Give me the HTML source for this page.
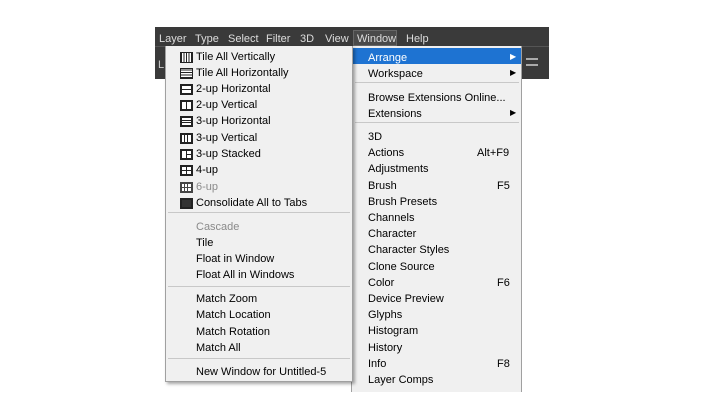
<!DOCTYPE html><html><head><style>
body{margin:0;width:725px;height:408px;background:#fff;position:relative;overflow:hidden;font-family:"Liberation Sans",sans-serif;font-size:11px;color:#000}
div{position:absolute;box-sizing:border-box}
.t{white-space:nowrap;line-height:16px;margin-top:1px}
.mb{color:#ddd;font-size:11px;top:31px}
.ic{width:13px;height:11px;border:2px solid #222;background:#fff;margin-top:1px}
.sep{height:1px;background:#c8c8c8}
.g{color:#8a8a8a}
</style></head><body>
<div style="left:155px;top:27px;width:394px;height:52px;background:#3a3a3a"></div>
<div style="left:155px;top:46px;width:394px;height:1px;background:#555"></div>
<div style="left:158px;top:56px;color:#ccc" class="t">L</div>
<div class="t mb" style="left:159px;top:30px">Layer</div>
<div class="t mb" style="left:195px;top:30px">Type</div>
<div class="t mb" style="left:228px;top:30px">Select</div>
<div class="t mb" style="left:266px;top:30px">Filter</div>
<div class="t mb" style="left:300px;top:30px">3D</div>
<div class="t mb" style="left:325px;top:30px">View</div>
<div style="left:353px;top:30px;width:44px;height:16px;background:#4a4a4a;border:1px solid #666"></div>
<div class="t mb" style="left:357px;top:30px">Window</div>
<div class="t mb" style="left:406px;top:30px">Help</div>
<div style="left:526px;top:58px;width:12px;height:2px;background:#aaa"></div>
<div style="left:526px;top:64px;width:12px;height:2px;background:#aaa"></div>
<!-- right menu -->
<div style="left:351px;top:46px;width:171px;height:346px;background:#f0f0f0;border:1px solid #a0a0a0;border-top:none;border-bottom:none"></div>
<div style="left:353px;top:48px;width:168px;height:16px;background:#1e73d2"></div>
<div class="t" style="left:368px;top:49px;color:#fff">Arrange</div>
<div class="t" style="left:510px;top:48px;color:#fff;font-size:8px">▶</div>
<div class="t" style="left:368px;top:65px">Workspace</div>
<div class="t" style="left:510px;top:64px;font-size:8px">▶</div>
<div class="sep" style="left:355px;top:82px;width:164px"></div>
<div class="t" style="left:368px;top:89px">Browse Extensions Online...</div>
<div class="t" style="left:368px;top:105px">Extensions</div>
<div class="t" style="left:510px;top:104px;font-size:8px">▶</div>
<div class="sep" style="left:355px;top:122px;width:164px"></div>
<div class="t" style="left:368px;top:128px">3D</div>
<div class="t" style="left:368px;top:144px">Actions</div><div class="t" style="left:477px;top:144px">Alt+F9</div>
<div class="t" style="left:368px;top:160px">Adjustments</div>
<div class="t" style="left:368px;top:177px">Brush</div><div class="t" style="left:497px;top:177px">F5</div>
<div class="t" style="left:368px;top:193px">Brush Presets</div>
<div class="t" style="left:368px;top:209px">Channels</div>
<div class="t" style="left:368px;top:225px">Character</div>
<div class="t" style="left:368px;top:241px">Character Styles</div>
<div class="t" style="left:368px;top:258px">Clone Source</div>
<div class="t" style="left:368px;top:274px">Color</div><div class="t" style="left:497px;top:274px">F6</div>
<div class="t" style="left:368px;top:290px">Device Preview</div>
<div class="t" style="left:368px;top:306px">Glyphs</div>
<div class="t" style="left:368px;top:322px">Histogram</div>
<div class="t" style="left:368px;top:339px">History</div>
<div class="t" style="left:368px;top:355px">Info</div><div class="t" style="left:497px;top:355px">F8</div>
<div class="t" style="left:368px;top:371px">Layer Comps</div>
<!-- left menu -->
<div style="left:165px;top:46px;width:188px;height:336px;background:#f0f0f0;border:1px solid #a0a0a0;border-top:none;box-shadow:2px 2px 3px rgba(0,0,0,.35)"></div>
<div class="ic" style="left:180px;top:51px;border-width:1px;background:repeating-linear-gradient(90deg,#222 0 1px,#fff 1px 2.5px)"></div>
<div class="t" style="left:196px;top:48px">Tile All Vertically</div>
<div class="ic" style="left:180px;top:67px;border-width:1px;background:repeating-linear-gradient(0deg,#222 0 1px,#fff 1px 2.5px)"></div>
<div class="t" style="left:196px;top:64px">Tile All Horizontally</div>
<div class="ic" style="left:180px;top:83px;background:linear-gradient(#fff 0 3px,#222 3px 4px,#fff 4px)"></div>
<div class="t" style="left:196px;top:80px">2-up Horizontal</div>
<div class="ic" style="left:180px;top:99px;background:linear-gradient(90deg,#fff 0 4px,#222 4px 5px,#fff 5px)"></div>
<div class="t" style="left:196px;top:96px">2-up Vertical</div>
<div class="ic" style="left:180px;top:115px;background:linear-gradient(#fff 0 2px,#222 2px 3px,#fff 3px 4px,#222 4px 5px,#fff 5px)"></div>
<div class="t" style="left:196px;top:112px">3-up Horizontal</div>
<div class="ic" style="left:180px;top:132px;background:linear-gradient(90deg,#fff 0 2px,#222 2px 3px,#fff 3px 5px,#222 5px 6px,#fff 6px)"></div>
<div class="t" style="left:196px;top:129px">3-up Vertical</div>
<div class="ic" style="left:180px;top:148px;background:linear-gradient(90deg,#fff 0 4px,#222 4px 5px,transparent 5px),linear-gradient(#fff 0 3px,#222 3px 4px,#fff 4px)"></div>
<div class="t" style="left:196px;top:145px">3-up Stacked</div>
<div class="ic" style="left:180px;top:164px;background:linear-gradient(90deg,transparent 0 4px,#222 4px 5px,transparent 5px),linear-gradient(#fff 0 3px,#222 3px 4px,#fff 4px)"></div>
<div class="t" style="left:196px;top:161px">4-up</div>
<div class="ic" style="left:180px;top:181px;border-color:#444;background:linear-gradient(90deg,transparent 0 2px,#444 2px 3px,transparent 3px 5px,#444 5px 6px,transparent 6px),linear-gradient(#fff 0 3px,#444 3px 4px,#fff 4px)"></div>
<div class="t g" style="left:196px;top:178px">6-up</div>
<div class="ic" style="left:180px;top:197px;background:#333"></div>
<div class="t" style="left:196px;top:194px">Consolidate All to Tabs</div>
<div class="sep" style="left:168px;top:212px;width:182px"></div>
<div class="t g" style="left:196px;top:218px">Cascade</div>
<div class="t" style="left:196px;top:234px">Tile</div>
<div class="t" style="left:196px;top:250px">Float in Window</div>
<div class="t" style="left:196px;top:266px">Float All in Windows</div>
<div class="sep" style="left:168px;top:286px;width:182px"></div>
<div class="t" style="left:196px;top:290px">Match Zoom</div>
<div class="t" style="left:196px;top:306px">Match Location</div>
<div class="t" style="left:196px;top:323px">Match Rotation</div>
<div class="t" style="left:196px;top:339px">Match All</div>
<div class="sep" style="left:168px;top:358px;width:182px"></div>
<div class="t" style="left:196px;top:363px">New Window for Untitled-5</div>
</body></html>
